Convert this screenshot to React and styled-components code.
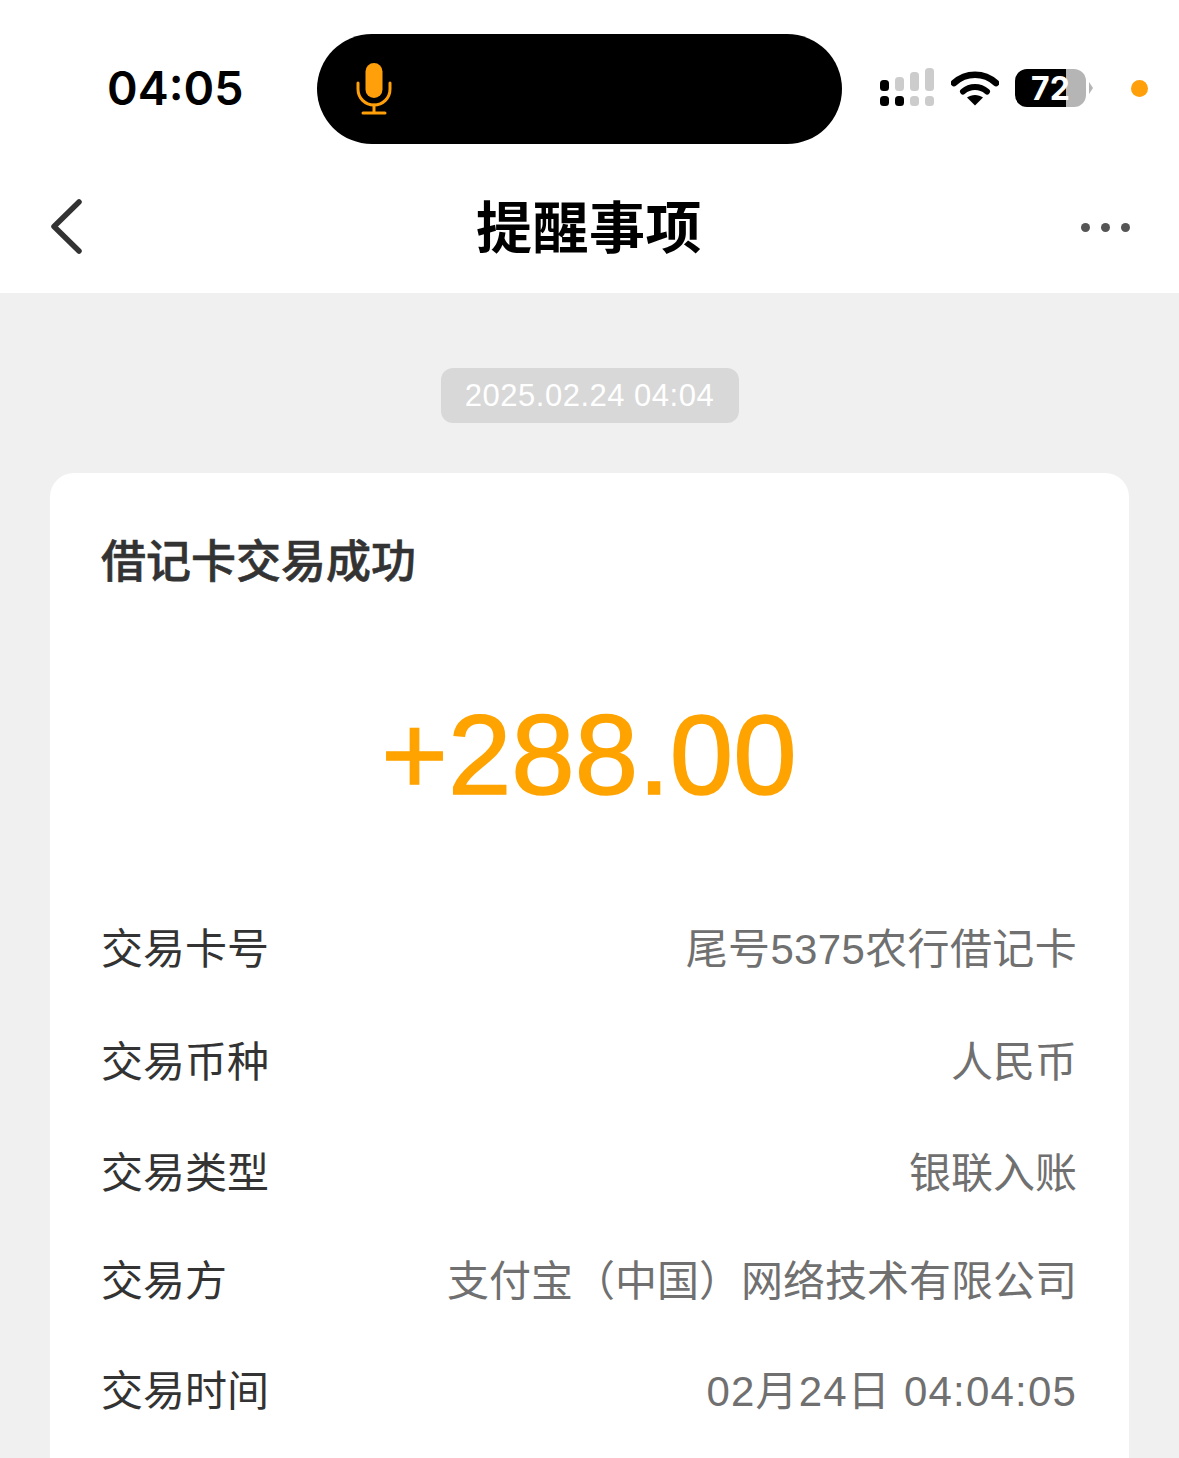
import React from 'react'
import styled, { createGlobalStyle } from 'styled-components'

const GlobalStyle = createGlobalStyle`
    html, body {
        margin: 0;
        padding: 0;
        background: #f0f0f0;
    }
    body {
        font-family: "Liberation Sans", "Noto Sans CJK SC", sans-serif;
    }
`;

const rows = [
    { label: '交易卡号', value: '尾号5375农行借记卡', height: 113, tracking: 0.35 },
    { label: '交易币种', value: '人民币', height: 112, tracking: 0 },
    { label: '交易类型', value: '银联入账', height: 110, tracking: 0 },
    { label: '交易方', value: '支付宝（中国）网络技术有限公司', height: 106, tracking: 0 },
    { label: '交易时间', value: '02月24日 04:04:05', height: 114, tracking: 1.2 },
]

const MicIcon = () => (
    <svg width="36" height="52" viewBox="0 0 36 52" fill="none">
        <rect x="9.5" y="0" width="17" height="35" rx="8.5" fill="#ff9f0a" />
        <path d="M2 20v6c0 9 7 16 16 16s16-7 16-16v-6" stroke="#ff9f0a" strokeWidth="3" strokeLinecap="round" />
        <path d="M18 42v7M7 50h22" stroke="#ff9f0a" strokeWidth="3" strokeLinecap="round" />
    </svg>
)

const SignalIcon = () => (
    <svg width="56" height="40" viewBox="0 0 56 40">
        <rect x="0" y="12" width="9" height="11" rx="3.5" fill="#000" />
        <rect x="0" y="28" width="9" height="10" rx="3.5" fill="#000" />
        <rect x="15" y="9" width="9" height="14" rx="3.5" fill="#ccc" />
        <rect x="15" y="28" width="9" height="10" rx="3.5" fill="#000" />
        <rect x="30" y="4" width="9" height="19" rx="3.5" fill="#ccc" />
        <rect x="30" y="28" width="9" height="10" rx="3.5" fill="#ccc" />
        <rect x="45" y="0" width="9" height="23" rx="3.5" fill="#ccc" />
        <rect x="45" y="28" width="9" height="10" rx="3.5" fill="#ccc" />
    </svg>
)

const WifiIcon = () => (
    <svg width="48" height="36" viewBox="0 0 48 36" fill="none">
        <path d="M3 13C15 2 33 2 45 13" stroke="#000" strokeWidth="6.5" strokeLinecap="round" />
        <path d="M12 21.500C19 15.500 29 15.500 36 21.500" stroke="#000" strokeWidth="6" strokeLinecap="round" />
        <path d="M24 35.500L16 27.500C20.500 24 27.500 24 32 27.500Z" fill="#000" />
    </svg>
)

const App = () => {
    return (
        <Page>
            <GlobalStyle />
            <Header>
                <StatusBar>
                    <Clock>04:05</Clock>
                    <Island>
                        <MicIcon />
                    </Island>
                    <StatusIcons>
                        <SignalIcon />
                        <WifiSlot>
                            <WifiIcon />
                        </WifiSlot>
                        <Battery>
                            <BatteryLevel>72</BatteryLevel>
                        </Battery>
                        <BatteryCap />
                        <PrivacyDot />
                    </StatusIcons>
                </StatusBar>
                <NavBar>
                    <svg width="36" height="60" viewBox="0 0 36 60" fill="none">
                        <path d="M31 5L6 29.500L31 54" stroke="#333" strokeWidth="5.500" strokeLinecap="round" strokeLinejoin="round" />
                    </svg>
                    <NavTitle>提醒事项</NavTitle>
                    <MoreDots>
                        <Dot />
                        <Dot />
                        <Dot />
                    </MoreDots>
                </NavBar>
            </Header>

            <Content>
                <DateChip>2025.02.24 04:04</DateChip>
                <Card>
                    <CardTitle>借记卡交易成功</CardTitle>
                    <Amount>+288.00</Amount>
                    {rows.map((row) => (
                        <Row key={row.label} $height={row.height}>
                            <RowLabel>{row.label}</RowLabel>
                            <RowValue $tracking={row.tracking}>{row.value}</RowValue>
                        </Row>
                    ))}
                </Card>
            </Content>
        </Page>
    )
}

export default App

const Page = styled.div`
    width: 1179px;
    height: 1458px;
    overflow: hidden;
    background: #f0f0f0;
`;

const Header = styled.header`
    background: #fff;
    height: 293px;
`;

const StatusBar = styled.div`
    display: flex;
    align-items: flex-start;
    height: 161px;
    padding-top: 34px;
    box-sizing: border-box;
`;

const Clock = styled.div`
    width: 317px;
    padding-left: 107px;
    box-sizing: border-box;
    font-family: Inter, sans-serif;
    font-size: 46.500px;
    font-weight: 600;
    line-height: 108px;
    color: #000;
`;

const Island = styled.div`
    display: flex;
    align-items: center;
    width: 525px;
    height: 110px;
    padding-left: 39px;
    box-sizing: border-box;
    border-radius: 55px;
    background: #000;
`;

const StatusIcons = styled.div`
    display: flex;
    align-items: center;
    height: 108px;
    padding-left: 38px;
`;

const WifiSlot = styled.div`
    display: flex;
    margin-left: 15px;
`;

const Battery = styled.div`
    display: flex;
    align-items: center;
    justify-content: center;
    width: 71px;
    height: 38px;
    margin-left: 16px;
    border-radius: 12px;
    background: linear-gradient(to right, #000 0 72%, #b5b5b5 72% 100%);
`;

const BatteryLevel = styled.span`
    font-family: Inter, sans-serif;
    font-size: 32px;
    font-weight: 700;
    color: #fff;
`;

const BatteryCap = styled.div`
    width: 0;
    height: 0;
    margin-left: 3px;
    border-top: 6px solid transparent;
    border-bottom: 6px solid transparent;
    border-left: 4px solid #b5b5b5;
`;

const PrivacyDot = styled.div`
    width: 17px;
    height: 17px;
    margin-left: 38px;
    border-radius: 50%;
    background: #ff9f0a;
`;

const NavBar = styled.nav`
    display: grid;
    grid-template-columns: 1fr auto 1fr;
    align-items: center;
    height: 132px;
    padding: 0 49px 0 48px;
`;

const NavTitle = styled.h1`
    margin: 0;
    padding-bottom: 8px;
    font-family: "Noto Sans CJK SC", sans-serif;
    font-size: 56px;
    font-weight: 700;
    letter-spacing: 0.5px;
    color: #000;
`;

const MoreDots = styled.div`
    display: flex;
    justify-content: flex-end;
    gap: 11px;
`;

const Dot = styled.span`
    width: 9px;
    height: 9px;
    border-radius: 50%;
    background: #555;
`;

const Content = styled.main`
    display: flex;
    flex-direction: column;
    align-items: center;
    padding-top: 75px;
`;

const DateChip = styled.div`
    width: 298px;
    height: 55px;
    border-radius: 12px;
    background: #d8d8d8;
    color: #fff;
    font-size: 31px;
    letter-spacing: 0.500px;
    line-height: 55px;
    text-align: center;
`;

const Card = styled.section`
    width: 1079px;
    height: 1100px;
    margin-top: 50px;
    padding: 54px 52px 0 51px;
    box-sizing: border-box;
    border-radius: 24px;
    background: #fff;
`;

const CardTitle = styled.h2`
    margin: 0;
    font-family: "Noto Sans CJK SC", sans-serif;
    font-size: 45px;
    font-weight: 500;
    line-height: 64px;
    color: #333;
    -webkit-text-stroke: 0.6px #333;
`;

const Amount = styled.div`
    margin-top: 89px;
    margin-bottom: 59px;
    font-size: 114px;
    line-height: 150px;
    text-align: center;
    color: #ffa300;
    -webkit-text-stroke: 1.5px #ffa300;
`;

const Row = styled.div`
    display: flex;
    align-items: center;
    justify-content: space-between;
    height: ${(props) => props.$height}px;
    font-family: "Liberation Sans", "Noto Sans CJK SC", sans-serif;
    font-size: 42px;
`;

const RowLabel = styled.span`
    color: #333;
`;

const RowValue = styled.span`
    color: #707070;
    letter-spacing: ${(props) => props.$tracking}px;
`;
